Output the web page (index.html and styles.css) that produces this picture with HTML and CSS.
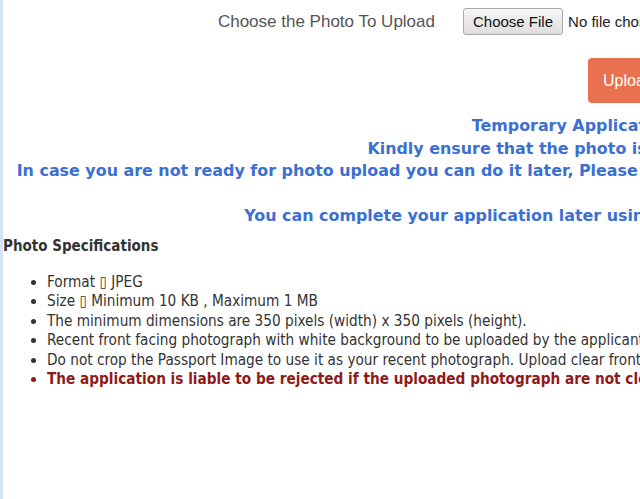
FILE: index.html
```html
<!DOCTYPE html>
<html lang="en">
<head>
    <meta charset="UTF-8">
    <meta name="viewport" content="width=device-width, initial-scale=1.0">
    <title>Photo Upload</title>
    <link rel="stylesheet" href="styles.css">
</head>
<body>
    <div class="page">
        <div class="upload-row">
            <label class="upload-label" for="photo">Choose the Photo To Upload</label>
            <div class="file-input">
                <span class="file-btn">Choose File</span>
                <span class="file-name">No file chosen</span>
            </div>
        </div>

        <div class="button-row">
            <button class="upload-btn">Upload Photo</button>
        </div>

        <div class="notice">
            <p>Temporary Application ID : 2024000123</p>
            <p>Kindly ensure that the photo is as per the specifications below</p>
            <p>In case you are not ready for photo upload you can do it later, Please note down the Temporary Application ID and Date of Birth for later use</p>
            <p>&nbsp;</p>
            <p>You can complete your application later using Temporary Application ID and Date of Birth.</p>
        </div>

        <div class="specs">
            <h4>Photo Specifications</h4>
            <ul>
                <li>Format &#9647; JPEG</li>
                <li>Size &#9647; Minimum 10 KB , Maximum 1 MB</li>
                <li>The minimum dimensions are 350 pixels (width) x 350 pixels (height).</li>
                <li>Recent front facing photograph with white background to be uploaded by the applicant.</li>
                <li>Do not crop the Passport Image to use it as your recent photograph. Upload clear front facing photograph.</li>
                <li class="warn">The application is liable to be rejected if the uploaded photograph are not clear.</li>
            </ul>
        </div>
    </div>
</body>
</html>
```

FILE: styles.css
```css
html, body {
    overflow: hidden;
}

body {
    margin: 0;
    background: #fff;
    border-left: 3px solid #d4e4f7;
    min-height: 499px;
    font-family: "DejaVu Sans Condensed", "DejaVu Sans", sans-serif;
}

.page {
    width: 1292px;
}

.upload-row {
    display: grid;
    grid-template-columns: 460px 1fr;
    align-items: center;
    padding-top: 8px;
}

.upload-label {
    font-family: "Liberation Sans", Arial, sans-serif;
    font-size: 17px;
    color: #555;
    text-align: right;
    padding-right: 28px;
}

.file-input {
    display: flex;
    align-items: center;
    font-family: "Liberation Sans", Arial, sans-serif;
    font-size: 15px;
    color: #222;
}

.file-btn {
    display: inline-block;
    height: 25px;
    line-height: 25px;
    padding: 0 9px;
    border: 1px solid #a9a9a9;
    border-radius: 3px;
    background: linear-gradient(#f6f6f6, #dedede);
    color: #111;
}

.file-name {
    margin-left: 5px;
}

.button-row {
    padding-left: 585px;
    margin-top: 23px;
}

.upload-btn {
    height: 45px;
    padding: 0 15px;
    border: none;
    border-radius: 4px;
    background: #ea7150;
    color: #fff;
    font-family: "Liberation Sans", Arial, sans-serif;
    font-size: 16px;
}

.notice {
    margin-top: 12px;
    text-align: center;
    color: #3b6fd1;
    font-family: "DejaVu Sans", sans-serif;
    font-weight: bold;
    font-size: 15.9px;
    line-height: 22.5px;
    white-space: nowrap;
}

.notice p {
    margin: 0;
}

.specs {
    margin-top: 7px;
    color: #333;
}

.specs h4 {
    margin: 0;
    font-size: 15px;
    line-height: 22px;
}

.specs ul {
    margin: 16px 0 0;
    padding-left: 44px;
    font-size: 15.2px;
    line-height: 19.6px;
    white-space: nowrap;
}

.specs li.warn {
    color: #8f1a1a;
    font-weight: bold;
}
```
